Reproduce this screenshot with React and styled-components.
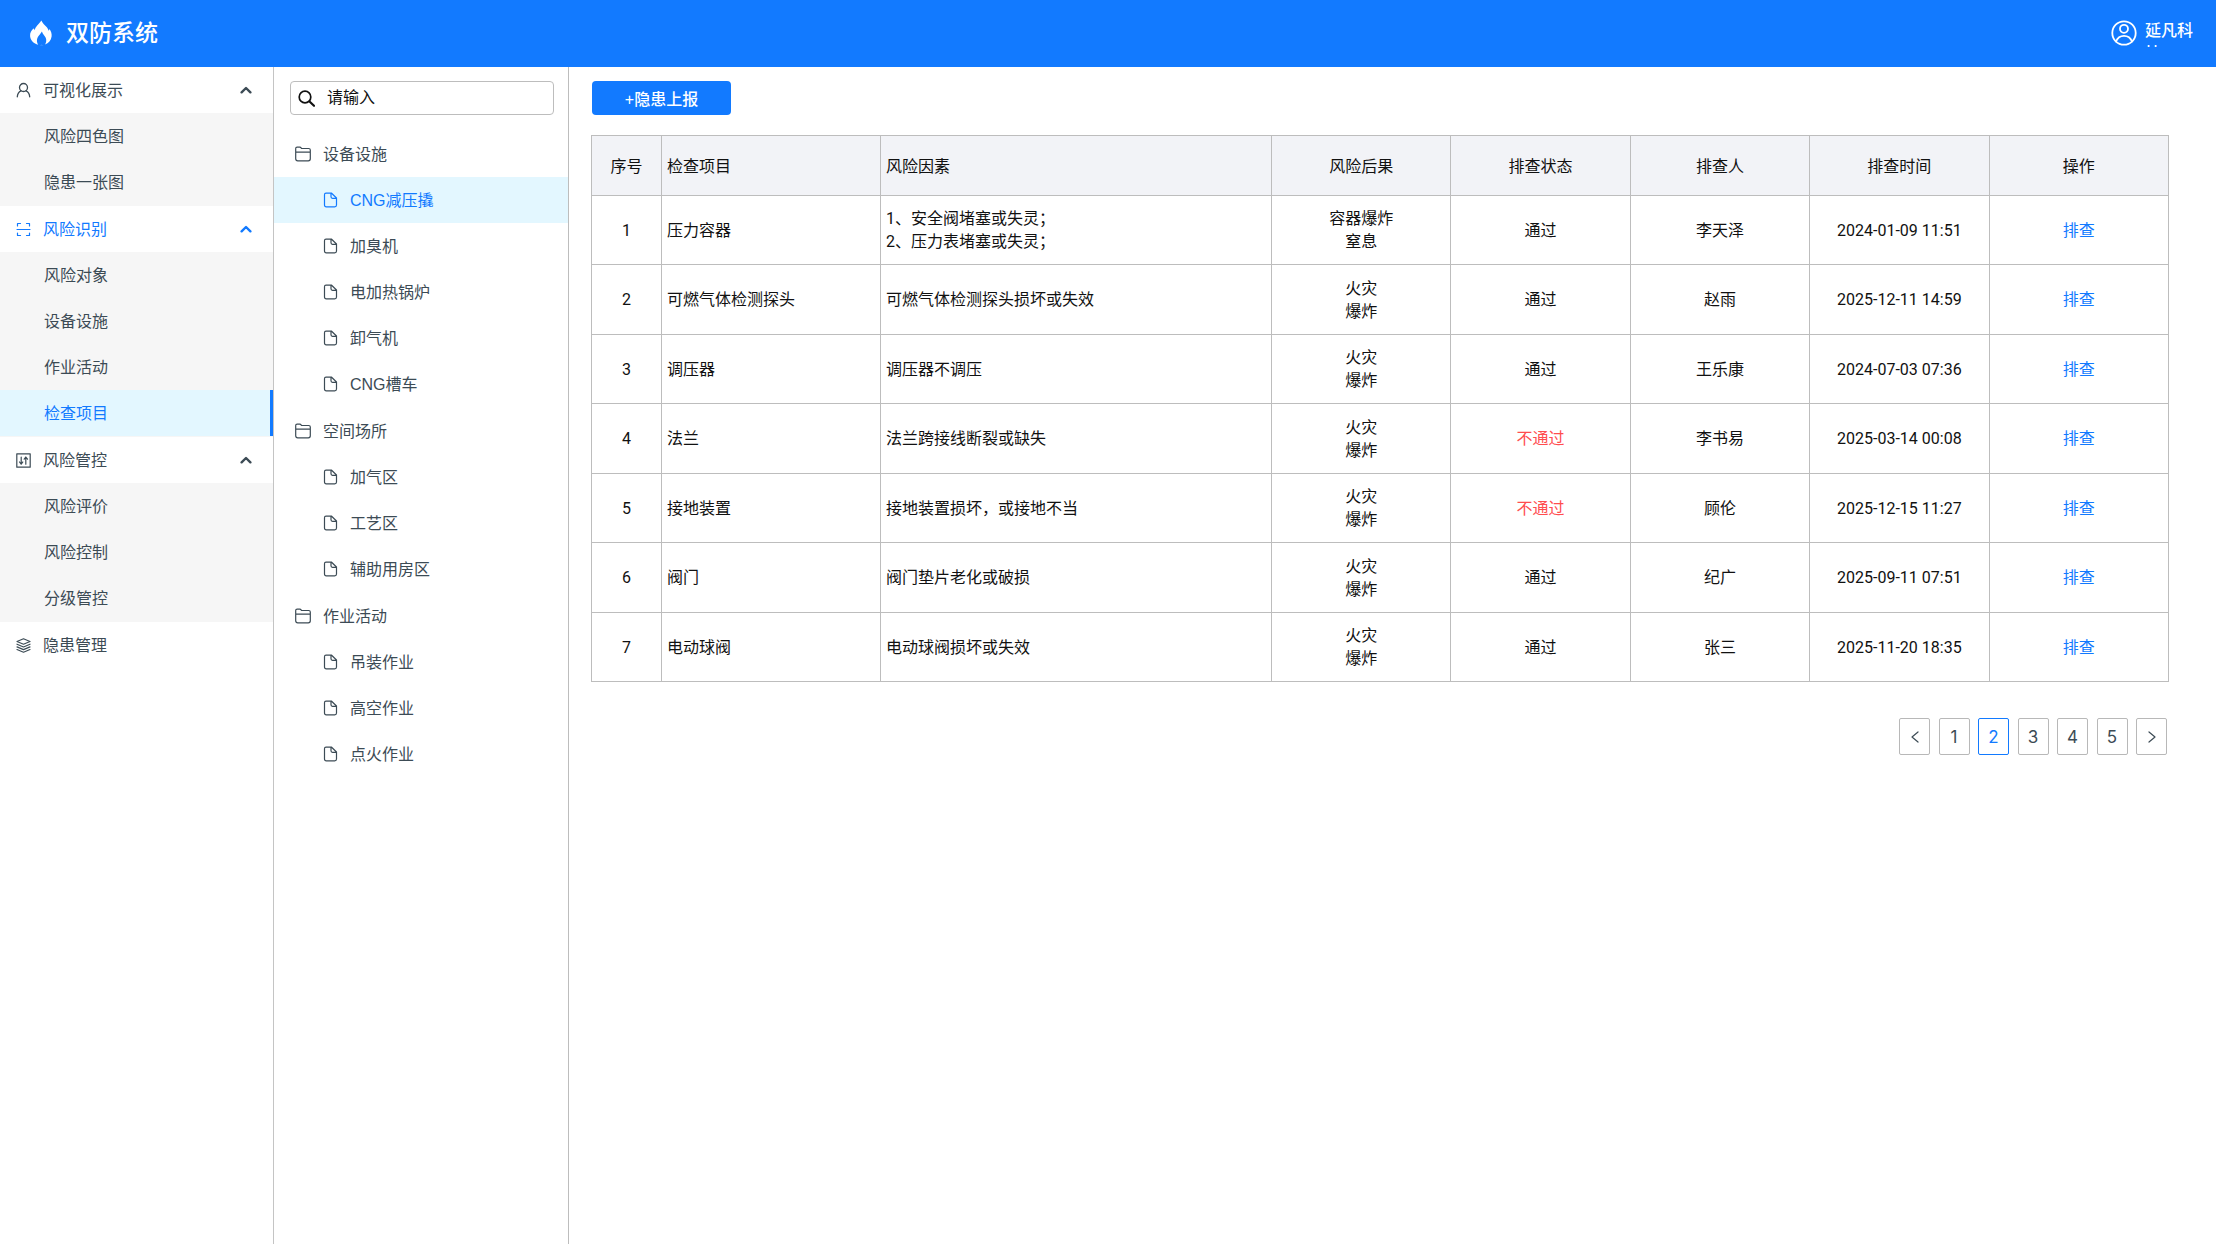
import React, { useState } from "react";
import styled, { createGlobalStyle, css } from "styled-components";

const GlobalStyle = createGlobalStyle`
  * {
    box-sizing: border-box;
  }
  body {
    margin: 0;
    background-color: white;
    color: #111;
    font-family: "Liberation Sans", "Noto Sans CJK SC", sans-serif;
    font-size: 16px;
  }
  button, input {
    font-family: inherit;
    font-size: inherit;
  }
  a {
    text-decoration: none;
  }
`;

const Page = styled.div`
  min-height: 100vh;
  display: flex;
  flex-direction: column;
`;

const Header = styled.header`
  height: 67px;
  padding: 0 19px 2px 29px;
  display: flex;
  align-items: center;
  justify-content: space-between;
  background-color: #127aff;
  color: white;
`;

const Brand = styled.div`
  display: flex;
  align-items: center;
  gap: 13px;
`;

const Title = styled.h1`
  margin: 0;
  font-size: 23px;
  line-height: 32px;
  font-weight: 500;
`;

const User = styled.div`
  display: flex;
  align-items: center;
  gap: 8px;
`;

const UserName = styled.span`
  width: 52px;
  height: 28px;
  line-height: 23px;
  overflow: hidden;
  font-weight: 500;
`;

const Body = styled.div`
  flex: 1;
  display: flex;
`;

const Sidebar = styled.nav`
  width: 274px;
  flex-shrink: 0;
  border-right: 1px solid #c4c4c4;
`;

const menuRow = css`
  width: 100%;
  height: 46px;
  display: flex;
  align-items: center;
  color: ${(props) => (props.$active ? "#127aff" : "#3c4b55")};
`;

const MenuTitle = styled.button`
  ${menuRow}
  border: none;
  background: none;
  padding: 0 21px 0 16px;
  gap: 12px;
  cursor: pointer;
`;

const MenuText = styled.span`
  flex: 1;
  padding-bottom: 2px;
  text-align: left;
`;

const SubMenu = styled.div`
  padding-bottom: 1px;
  background-color: #f6f6f6;
`;

const MenuItem = styled.a`
  ${menuRow}
  padding-left: 44px;
  ${(props) =>
    props.$active &&
    css`
      background-color: #e3f7ff;
      border-right: 3px solid #127aff;
    `}
`;

const TreePanel = styled.aside`
  width: 295px;
  flex-shrink: 0;
  padding-top: 14px;
  border-right: 1px solid #bdbdbd;
`;

const SearchBox = styled.label`
  height: 34px;
  margin: 0 14px 16px 16px;
  padding: 0 7px;
  display: flex;
  align-items: center;
  gap: 12px;
  border: 1px solid #bdbdbd;
  border-radius: 4px;
`;

const SearchInput = styled.input`
  flex: 1;
  min-width: 0;
  padding: 0;
  border: none;
  outline: none;
  background: none;
  &::placeholder {
    color: #111;
    opacity: 1;
  }
`;

const TreeGroup = styled.div`
  padding-bottom: 1px;
`;

const TreeTitle = styled.button`
  ${menuRow}
  border: none;
  background: none;
  padding: 0 0 0 21px;
  gap: 12px;
  cursor: pointer;
`;

const TreeItem = styled.a`
  ${menuRow}
  padding-left: 49px;
  gap: 12px;
  background-color: ${(props) => (props.$active ? "#e3f7ff" : "transparent")};
`;

const Main = styled.main`
  flex: 1;
  min-width: 0;
  padding: 14px 47px 40px 22px;
`;

const ReportButton = styled.button`
  display: block;
  width: 139px;
  height: 34px;
  margin-left: 1px;
  border: none;
  border-radius: 4px;
  background-color: #127aff;
  color: white;
  font-weight: 500;
  cursor: pointer;
`;

const Table = styled.table`
  width: 100%;
  margin-top: 20px;
  border-collapse: collapse;
  table-layout: fixed;
  font-family: Roboto, "Noto Sans CJK SC", sans-serif;
`;

const Col = styled.col`
  width: ${(props) => props.$width};
`;

const Row = styled.tr`
  height: 69px;
  &:nth-child(even) {
    height: 70px;
  }
`;

const HeadCell = styled.th`
  height: 60px;
  padding: 0 5px 2px;
  border: 1px solid #bdbdbd;
  background-color: #f2f3f7;
  font-weight: 400;
  text-align: ${(props) => props.$align || "center"};
`;

const Cell = styled.td`
  padding: 0 5px;
  border: 1px solid #bdbdbd;
  line-height: 23px;
  white-space: pre-line;
  text-align: ${(props) => props.$align || "center"};
  color: ${(props) => (props.$failed ? "#ff4d4f" : "inherit")};
`;

const ActionLink = styled.a`
  color: #127aff;
`;

const Pagination = styled.nav`
  width: 268px;
  margin: 36px 2px 0 auto;
  display: flex;
  justify-content: space-between;
`;

const PageButton = styled.button`
  width: 31px;
  height: 37px;
  padding: 0;
  display: flex;
  align-items: center;
  justify-content: center;
  border: 1px solid ${(props) => (props.$active ? "#127aff" : "#b8b8b8")};
  border-radius: 2px;
  background-color: white;
  color: ${(props) => (props.$active ? "#127aff" : "#3c4b55")};
  font-family: Inter, sans-serif;
  font-size: 17px;
  cursor: pointer;
`;

const Icon = styled.svg`
  flex-shrink: 0;
  fill: none;
  stroke: currentColor;
  stroke-width: ${(props) => props.$stroke || 1.2};
  stroke-linecap: round;
  stroke-linejoin: round;
`;

const FlameIcon = () => (
  <svg width="24" height="26" viewBox="0 0 24 26" fill="currentColor">
    <path d="M12.4 0.4C13.4 3 15.6 4.600 17.600 7C18.800 8.400 19.300 9.600 19.500 10.700C20 10.200 20.300 9.700 20.500 9C22 11.300 23 13.700 22.600 16.600C22.100 20.400 19.600 23.400 16 24.600C17.300 22.300 17.700 20 16.700 17.700C15.700 15.500 13.600 14.200 12.900 11.500C11.800 13.800 9.400 15.400 8.400 18C7.500 20.400 7.900 22.700 9.200 24.700C4.800 23.700 1.500 20.600 1.100 16.300C0.800 13 2.300 10 5 8.300C5 9 5.200 9.600 5.500 10.200C6.400 6.500 9.500 4.300 12.400 0.400Z" />
    <path d="M10.700 25.200Q12.400 24.300 14.500 25.200Z" opacity="0.500" />
  </svg>
);

const AvatarIcon = () => (
  <Icon width="26" height="26" viewBox="0 0 26 26" $stroke={1.8}>
    <circle cx="13" cy="13" r="11.700" />
    <circle cx="13" cy="8.800" r="4" />
    <path d="M5 21.500C6.500 17.600 9.500 15.800 13 15.800S19.500 17.600 21 21.500" />
  </Icon>
);

const PersonIcon = () => (
  <Icon width="15" height="16" viewBox="0 0 15 16" $stroke={1.3}>
    <circle cx="7.500" cy="5.500" r="4" />
    <path d="M5 8.800C2.800 9.800 1.500 12 1.300 14.800M10 8.800C12.200 9.800 13.500 12 13.700 14.800" />
  </Icon>
);

const ScanIcon = () => (
  <Icon width="15" height="15" viewBox="0 0 15 15">
    <path d="M1.500 4V1.500H4.500M10.500 1.500H13.500V4M1.500 11V13.500H4.500M10.500 13.500H13.500V11M1 7.500H14" />
  </Icon>
);

const ControlIcon = () => (
  <Icon width="15" height="15" viewBox="0 0 15 15">
    <path d="M0.800 0.800H14.200V14.200H0.800Z" />
    <path d="M5.200 4V11.200M3.500 9L5.200 11.200L6.800 9M9.800 11.200V4M8.200 6.200L9.800 4L11.500 6.200" />
  </Icon>
);

const LayersIcon = () => (
  <Icon width="15" height="15" viewBox="0 0 15 15">
    <path d="M7.500 0.800L14 3.500L7.500 6.200L1 3.500ZM1 6.200L7.500 9L14 6.200M1 8.900L7.500 11.600L14 8.900M1 11.500L7.500 14.200L14 11.500" />
  </Icon>
);

const CaretIcon = () => (
  <Icon width="12" height="8" viewBox="0 0 12 8" $stroke={2.4}>
    <path d="M1.600 6.300L6 2L10.400 6.300" />
  </Icon>
);

const SearchIcon = () => (
  <Icon width="17" height="17" viewBox="0 0 17 17" $stroke={1.7}>
    <circle cx="7" cy="7" r="5.800" />
    <path d="M11.500 11.500L16 15.800" strokeWidth="2.200" />
  </Icon>
);

const FolderIcon = () => (
  <Icon width="16" height="16" viewBox="0 0 16 16">
    <path d="M0.700 12.800V2.600Q0.700 1.200 2.100 1.200H4.800Q5.600 1.200 6.100 1.900L6.500 2.500H13.700Q15.300 2.500 15.300 4.100V12.800Q15.300 14.800 13.300 14.800H2.700Q0.700 14.800 0.700 12.800ZM0.900 6.100H15.200" />
  </Icon>
);

const FileIcon = () => (
  <Icon width="15" height="16" viewBox="0 0 15 16">
    <path d="M3 1.200H8.600L13.500 6V13Q13.500 14.800 11.700 14.800H3.300Q1.500 14.800 1.500 13V2.800Q1.500 1.200 3 1.200ZM8 1.500V4.800Q8 6.300 9.500 6.300H13.300" />
  </Icon>
);

const menus = [
  {
    title: "可视化展示",
    icon: <PersonIcon />,
    items: ["风险四色图", "隐患一张图"],
  },
  {
    title: "风险识别",
    icon: <ScanIcon />,
    items: ["风险对象", "设备设施", "作业活动", "检查项目"],
  },
  {
    title: "风险管控",
    icon: <ControlIcon />,
    items: ["风险评价", "风险控制", "分级管控"],
  },
  { title: "隐患管理", icon: <LayersIcon />, items: [] },
];

const tree = [
  {
    title: "设备设施",
    items: ["CNG减压撬", "加臭机", "电加热锅炉", "卸气机", "CNG槽车"],
  },
  { title: "空间场所", items: ["加气区", "工艺区", "辅助用房区"] },
  { title: "作业活动", items: ["吊装作业", "高空作业", "点火作业"] },
];

const rows = [
  {
    name: "压力容器",
    factor: "1、安全阀堵塞或失灵；\n2、压力表堵塞或失灵；",
    result: "容器爆炸\n窒息",
    pass: true,
    person: "李天泽",
    time: "2024-01-09 11:51",
  },
  {
    name: "可燃气体检测探头",
    factor: "可燃气体检测探头损坏或失效",
    result: "火灾\n爆炸",
    pass: true,
    person: "赵雨",
    time: "2025-12-11 14:59",
  },
  {
    name: "调压器",
    factor: "调压器不调压",
    result: "火灾\n爆炸",
    pass: true,
    person: "王乐康",
    time: "2024-07-03 07:36",
  },
  {
    name: "法兰",
    factor: "法兰跨接线断裂或缺失",
    result: "火灾\n爆炸",
    pass: false,
    person: "李书易",
    time: "2025-03-14 00:08",
  },
  {
    name: "接地装置",
    factor: "接地装置损坏，或接地不当",
    result: "火灾\n爆炸",
    pass: false,
    person: "顾伦",
    time: "2025-12-15 11:27",
  },
  {
    name: "阀门",
    factor: "阀门垫片老化或破损",
    result: "火灾\n爆炸",
    pass: true,
    person: "纪广",
    time: "2025-09-11 07:51",
  },
  {
    name: "电动球阀",
    factor: "电动球阀损坏或失效",
    result: "火灾\n爆炸",
    pass: true,
    person: "张三",
    time: "2025-11-20 18:35",
  },
];

const App = () => {
  const [menu, setMenu] = useState("检查项目");
  const [node, setNode] = useState("CNG减压撬");
  const [page, setPage] = useState(2);

  return (
    <Page>
      <GlobalStyle />
      <Header>
        <Brand>
          <FlameIcon />
          <Title>双防系统</Title>
        </Brand>
        <User>
          <AvatarIcon />
          <UserName>延凡科技</UserName>
        </User>
      </Header>
      <Body>
        <Sidebar>
          {menus.map((group) => (
            <div key={group.title}>
              <MenuTitle $active={group.items.includes(menu)}>
                {group.icon}
                <MenuText>{group.title}</MenuText>
                {group.items.length > 0 && <CaretIcon />}
              </MenuTitle>
              {group.items.length > 0 && (
                <SubMenu>
                  {group.items.map((item) => (
                    <MenuItem
                      key={item}
                      href="#"
                      $active={item === menu}
                      onClick={() => setMenu(item)}
                    >
                      <MenuText>{item}</MenuText>
                    </MenuItem>
                  ))}
                </SubMenu>
              )}
            </div>
          ))}
        </Sidebar>

        <TreePanel>
          <SearchBox>
            <SearchIcon />
            <SearchInput type="text" placeholder="请输入" />
          </SearchBox>
          {tree.map((group) => (
            <TreeGroup key={group.title}>
              <TreeTitle>
                <FolderIcon />
                <MenuText>{group.title}</MenuText>
              </TreeTitle>
              {group.items.map((item) => (
                <TreeItem
                  key={item}
                  href="#"
                  $active={item === node}
                  onClick={() => setNode(item)}
                >
                  <FileIcon />
                  <MenuText>{item}</MenuText>
                </TreeItem>
              ))}
            </TreeGroup>
          ))}
        </TreePanel>

        <Main>
          <ReportButton>+隐患上报</ReportButton>
          <Table>
            <colgroup>
              <Col $width="70px" />
              <Col $width="219px" />
              <Col $width="391px" />
              <Col />
              <Col />
              <Col />
              <Col />
              <Col />
            </colgroup>
            <thead>
              <tr>
                <HeadCell>序号</HeadCell>
                <HeadCell $align="left">检查项目</HeadCell>
                <HeadCell $align="left">风险因素</HeadCell>
                <HeadCell>风险后果</HeadCell>
                <HeadCell>排查状态</HeadCell>
                <HeadCell>排查人</HeadCell>
                <HeadCell>排查时间</HeadCell>
                <HeadCell>操作</HeadCell>
              </tr>
            </thead>
            <tbody>
              {rows.map((row, index) => (
                <Row key={row.name}>
                  <Cell>{index + 1}</Cell>
                  <Cell $align="left">{row.name}</Cell>
                  <Cell $align="left">{row.factor}</Cell>
                  <Cell>{row.result}</Cell>
                  <Cell $failed={!row.pass}>{row.pass ? "通过" : "不通过"}</Cell>
                  <Cell>{row.person}</Cell>
                  <Cell>{row.time}</Cell>
                  <Cell>
                    <ActionLink href="#">排查</ActionLink>
                  </Cell>
                </Row>
              ))}
            </tbody>
          </Table>

          <Pagination>
            <PageButton aria-label="上一页" onClick={() => setPage(Math.max(1, page - 1))}>
              <Icon width="8" height="12" viewBox="0 0 8 12">
                <path d="M7 1L1 6L7 11" />
              </Icon>
            </PageButton>
            {[1, 2, 3, 4, 5].map((n) => (
              <PageButton key={n} $active={n === page} onClick={() => setPage(n)}>
                {n}
              </PageButton>
            ))}
            <PageButton aria-label="下一页" onClick={() => setPage(Math.min(5, page + 1))}>
              <Icon width="8" height="12" viewBox="0 0 8 12">
                <path d="M1 1L7 6L1 11" />
              </Icon>
            </PageButton>
          </Pagination>
        </Main>
      </Body>
    </Page>
  );
};

export default App;
